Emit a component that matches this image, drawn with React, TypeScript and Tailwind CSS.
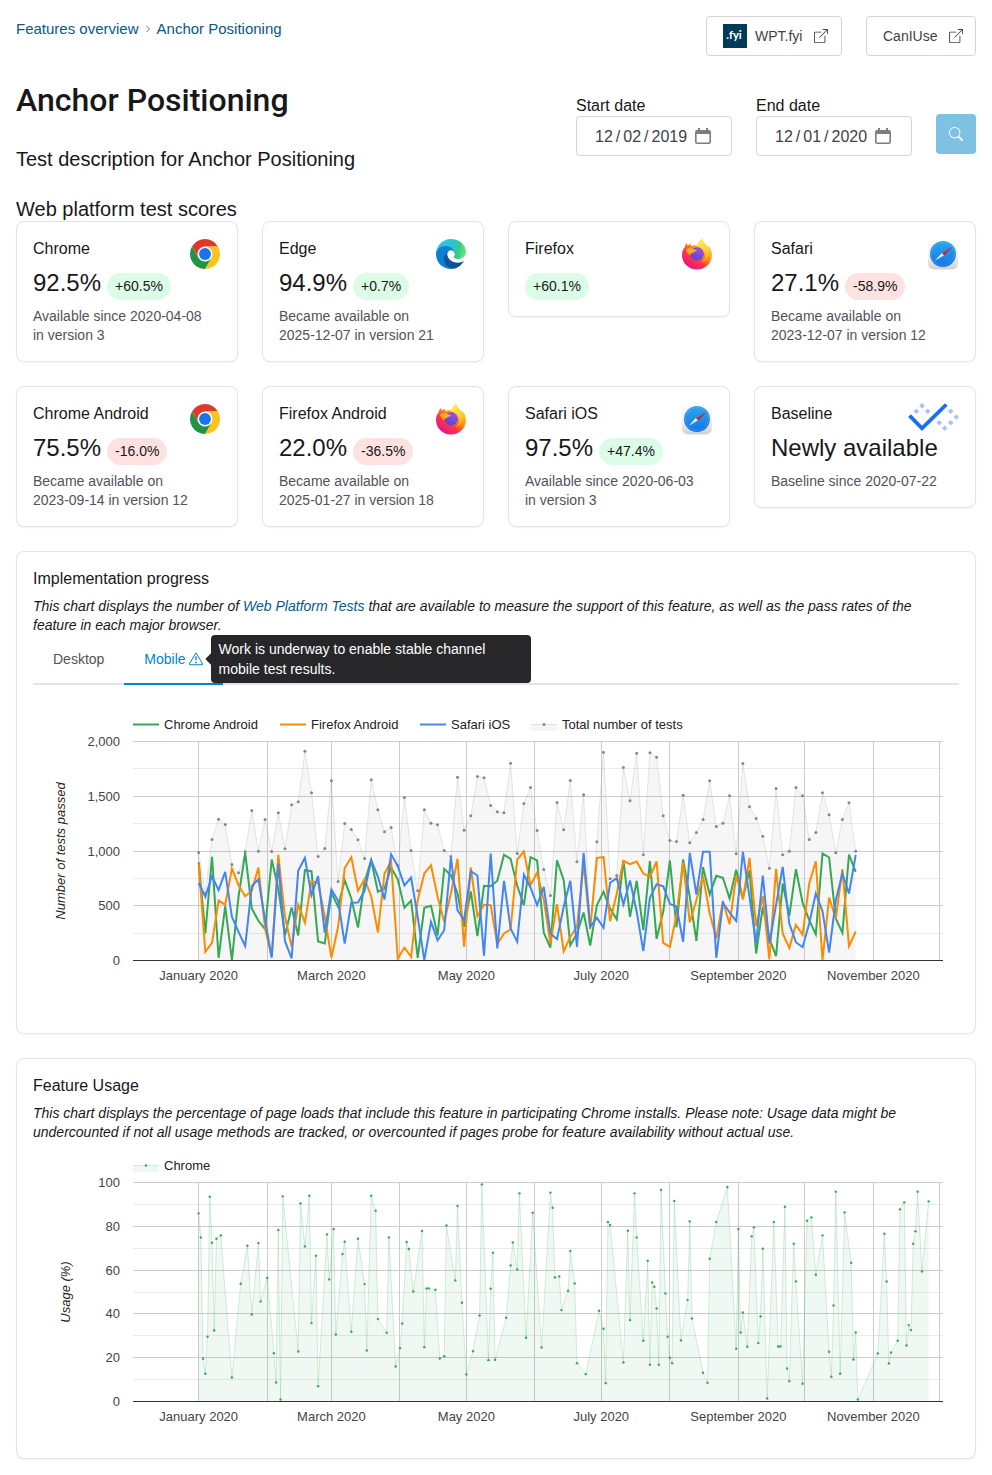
import React from "react";
import { BsBoxArrowUpRight, BsExclamationTriangle, BsSearch } from "react-icons/bs";

/* ---------- Browser logos ---------- */

function ChromeLogo() {
  return (
    <svg viewBox="-1.6 -1.6 51.2 51.2" className="size-8" role="img" aria-label="Chrome logo">
      <circle cx="24" cy="24" r="12" fill="#fff" />
      <path d="M24 12H44.78A24 24 0 0 0 3.22 12L13.61 30A12 12 0 0 1 24 12Z" fill="#e0392b" />
      <path d="M34.39 30 24 48A24 24 0 0 0 44.78 12H24A12 12 0 0 1 34.39 30Z" fill="#fcc31b" />
      <path d="M13.61 30 3.22 12A24 24 0 0 0 24 48L34.39 30A12 12 0 0 1 13.61 30Z" fill="#229342" />
      <circle cx="24" cy="24" r="9.5" fill="#1a73e8" />
    </svg>
  );
}

function EdgeLogo() {
  return (
    <svg viewBox="-8.5 -8.5 273 273" className="size-8" role="img" aria-label="Edge logo">
      <defs>
        <linearGradient id="edge-dark" x1="60" y1="180" x2="236" y2="180" gradientUnits="userSpaceOnUse">
          <stop offset="0" stopColor="#0c59a4" />
          <stop offset="1" stopColor="#114a8b" />
        </linearGradient>
        <linearGradient id="edge-mid" x1="140" y1="70" x2="50" y2="230" gradientUnits="userSpaceOnUse">
          <stop offset="0" stopColor="#1b7fc2" />
          <stop offset="0.3" stopColor="#1180d0" />
          <stop offset="1" stopColor="#0680d7" />
        </linearGradient>
        <linearGradient id="edge-top" x1="20" y1="60" x2="250" y2="110" gradientUnits="userSpaceOnUse">
          <stop offset="0" stopColor="#35c1f1" />
          <stop offset="0.45" stopColor="#2cc0d8" />
          <stop offset="0.75" stopColor="#36c98b" />
          <stop offset="1" stopColor="#66eb6e" />
        </linearGradient>
      </defs>
      <path
        d="M231.1 190.5a98 98 0 0 1-10.5 4.7 101.9 101.9 0 0 1-35.9 6.4c-47.3 0-88.5-32.5-88.5-74.3 0-11.4 6.4-22 16.4-27.4-42.8 1.8-53.8 46.4-53.8 72.5 0 74 68.1 81.4 82.8 81.4 7.9 0 19.8-2.3 27-4.6l1.3-.4a128.3 128.3 0 0 0 64.6-54.2c1.5-2.4-.8-5.2-3.4-4.1z"
        fill="url(#edge-dark)"
      />
      <path
        d="M105.7 241.4a79.2 79.2 0 0 1-22.7-21.3 80.7 80.7 0 0 1 29.5-120c3.2-1.5 8.4-4.1 15.5-4a32.4 32.4 0 0 1 25.7 13 31.9 31.9 0 0 1 6.3 18.7c0-.2 24.5-79.6-80-79.6-43.9 0-80 41.7-80 78.2-.2 19.3 4 38.5 12.1 56a128 128 0 0 0 156.4 67 75.5 75.5 0 0 1-62.8-8z"
        fill="url(#edge-mid)"
      />
      <path
        d="M152.3 148.9c-.8 1-3.3 2.5-3.3 5.7 0 2.6 1.7 5.1 4.8 7.3 14.4 10 41.5 8.7 41.6 8.7 10.7 0 21.1-2.9 30.3-8.3A61.4 61.4 0 0 0 256 109.4c.3-22.4-8-37.3-11.4-43.9C223.5 23.9 177.7 0 128 0 58 0 1 56.2 0 126.2c.5-36.5 36.8-66 80-66 3.5 0 23.5.3 42 10.1 16.3 8.6 24.9 19 30.8 29.3 6.2 10.6 7.3 24.1 7.3 29.5 0 5.4-2.7 13.3-7.8 19.8z"
        fill="url(#edge-top)"
      />
    </svg>
  );
}

function FirefoxLogo() {
  return (
    <svg viewBox="0 0 32 32" className="size-8" role="img" aria-label="Firefox logo">
      <defs>
        <linearGradient id="ff-body" x1="26" y1="5" x2="7" y2="29" gradientUnits="userSpaceOnUse">
          <stop offset="0" stopColor="#ffdc3e" />
          <stop offset="0.35" stopColor="#ff980e" />
          <stop offset="0.65" stopColor="#ff3647" />
          <stop offset="1" stopColor="#e31587" />
        </linearGradient>
        <linearGradient id="ff-flame" x1="20" y1="0" x2="27" y2="25" gradientUnits="userSpaceOnUse">
          <stop offset="0" stopColor="#fff44f" />
          <stop offset="0.5" stopColor="#ffd03a" />
          <stop offset="1" stopColor="#ff8a16" />
        </linearGradient>
        <radialGradient id="ff-globe" cx="19" cy="12" r="10" gradientUnits="userSpaceOnUse">
          <stop offset="0" stopColor="#a04bea" />
          <stop offset="1" stopColor="#5a4bd2" />
        </radialGradient>
      </defs>
      <path
        d="M3.8 9.2C4 7.6 4.7 6 5.8 5c.1 1.2.5 2 1 2.6C7.7 6.600 9 5.900 9.800 5.700c-.2 1 .1 1.800.5 2.300C13 6.800 16 7 18 8c0-3 1-5.500 3-7.500.4 2.600 1.800 4 3.600 5.700 1 .9 1.800 2.200 2.200 3.300.2-.6.1-1.300 0-2C30 10.500 31 13.300 31 17c0 8.300-6.600 14.500-15 14.500S1 25.200 1 17c0-3.200 1-6 2.800-7.800z"
        fill="url(#ff-body)"
      />
      <path
        d="M16 8.500C16.500 5 18.500 2.500 21 .5c.4 2.600 1.800 4 3.600 5.700 3 2.800 4.200 6.300 3.500 10.300-.8 4.300-4 7-7 7.300 2.500-2 3.900-5.300 3-8.300-1-3-4-6-8.100-7z"
        fill="url(#ff-flame)"
      />
      <circle cx="16.200" cy="15.800" r="6.600" fill="url(#ff-globe)" />
      <path
        d="M4.800 11.800c2-1.600 4.300-1.800 6.200-1.300C9.500 12 9 14.500 9.800 17.500c-2.600-1-4.300-3.300-5-5.700z"
        fill="#ff9420"
      />
      <path d="M5.500 11.500C7.500 9.800 9.800 9.900 11.500 10.700c1.300.6 2.700.9 4.500 1-.3 1.300-1.600 1.900-3 2.200-1 .3-1.500.9-1.500 1.700-2.800-.2-5-1.800-6-4.100z" fill="#ffae2a" />
    </svg>
  );
}

function SafariLogo() {
  return (
    <svg viewBox="0 0 32 32" className="size-8" role="img" aria-label="Safari logo">
      <defs>
        <linearGradient id="saf-tile" x1="0" y1="1" x2="0" y2="32" gradientUnits="userSpaceOnUse">
          <stop offset="0" stopColor="#fdfdfd" />
          <stop offset="0.6" stopColor="#eeeeee" />
          <stop offset="1" stopColor="#cfcfcf" />
        </linearGradient>
        <linearGradient id="saf-dial" x1="0" y1="3" x2="0" y2="29" gradientUnits="userSpaceOnUse">
          <stop offset="0" stopColor="#2ba8ee" />
          <stop offset="1" stopColor="#1673e8" />
        </linearGradient>
      </defs>
      <rect x="1" y="2" width="30" height="29.600" rx="6" fill="url(#saf-tile)" />
      <circle cx="16" cy="16" r="13" fill="url(#saf-dial)" />
      <circle cx="16" cy="16" r="11.400" fill="none" stroke="#fff" strokeOpacity="0.4" strokeWidth="0.800" strokeDasharray="0.500 0.700" />
      <path d="M8 22.600 15 14.900 17 17.300Z" fill="#fff" />
      <path d="M25.600 8.700 15 14.900 17 17.300Z" fill="#e8352e" />
      <path d="M8 22.600 17 17.300 16 16Z" fill="#cfdbe6" />
      <path d="M25.600 8.700 17 17.300 16 16Z" fill="#b0222c" />
    </svg>
  );
}

const dots = [
  [14, 2.7], [8.3, 8.3], [19.7, 8.3], [42.7, 8.3], [48.3, 14], [42.7, 19.7], [31.3, 19.7], [36.7, 25.3],
];

function BaselineLogo() {
  return (
    <svg viewBox="-1 0 52 32" className="h-8 w-[52px]" role="img" aria-label="Baseline newly available">
      {dots.map(([x, y]) => (
        <path key={`${x}-${y}`} d={`M${x} ${y - 2.8}l2.800 2.800-2.800 2.800-2.800-2.800z`} fill="#a8c3f2" />
      ))}
      <path d="M1.500 12.700 14 25.400 38.300 1.500" fill="none" stroke="#1b6ef3" strokeWidth="3.800" />
    </svg>
  );
}

/* ---------- Score cards ---------- */

type Score = {
  name: string;
  logo: React.ReactNode;
  score?: string;
  delta?: string;
  notes?: string[];
};

const scores: Score[] = [
  { name: "Chrome", logo: <ChromeLogo />, score: "92.5%", delta: "+60.5%", notes: ["Available since 2020-04-08", "in version 3"] },
  { name: "Edge", logo: <EdgeLogo />, score: "94.9%", delta: "+0.7%", notes: ["Became available on", "2025-12-07 in version 21"] },
  { name: "Firefox", logo: <FirefoxLogo />, delta: "+60.1%" },
  { name: "Safari", logo: <SafariLogo />, score: "27.1%", delta: "-58.9%", notes: ["Became available on", "2023-12-07 in version 12"] },
  { name: "Chrome Android", logo: <ChromeLogo />, score: "75.5%", delta: "-16.0%", notes: ["Became available on", "2023-09-14 in version 12"] },
  { name: "Firefox Android", logo: <FirefoxLogo />, score: "22.0%", delta: "-36.5%", notes: ["Became available on", "2025-01-27 in version 18"] },
  { name: "Safari iOS", logo: <SafariLogo />, score: "97.5%", delta: "+47.4%", notes: ["Available since 2020-06-03", "in version 3"] },
  { name: "Baseline", logo: <BaselineLogo />, score: "Newly available", notes: ["Baseline since 2020-07-22"] },
];

function ScoreCard({ name, logo, score, delta, notes }: Score) {
  const pill = delta?.startsWith("+") ? "bg-[#dcfce7]" : "bg-[#fee2e2]";
  return (
    <article className="rounded-lg border border-[#e4e4e7] bg-white p-4 shadow-xs">
      <div className="flex h-8 items-start justify-between">
        <h3 className="text-base leading-[22px]">{name}</h3>
        {logo}
      </div>
      <div className="flex h-[30px] items-end gap-1.5 whitespace-nowrap">
        {score && <span className="text-2xl leading-[34px]">{score}</span>}
        {delta && <span className={`rounded-full px-2 text-sm leading-[27px] ${pill}`}>{delta}</span>}
      </div>
      {notes && (
        <p className="mt-[7px] text-sm leading-[19px] text-[#52525b]">
          {notes.map((n) => (
            <span key={n} className="block">{n}</span>
          ))}
        </p>
      )}
    </article>
  );
}

/* ---------- Charts ---------- */

const PLOT_H = 219;
const X0 = 165.7;
const PX_PER_DAY = 2.212;
// Samples are stored on a 657-step grid, measured downward from row 34 (top of the plot).
const LEVEL_TOP = 34;
const LEVEL_SPAN = 657;

const totalTests = [
  367, 490, 328, 267, 283, 403, 428, 365, 241, 363, 268, 364, 248, 356, 224, 215, 63, 188, 379, 355,
  152, 454, 280, 298, 329, 385, 149, 239, 305, 292, 406, 202, 361, 482, 239, 279, 284, 361, 379, 141,
  300, 257, 139, 143, 226, 245, 248, 99, 370, 220, 172, 301, 418, 496, 217, 299, 151, 395, 194, 580,
  335, 66, 446, 436, 112, 212, 69, 374, 68, 81, 257, 331, 334, 195, 338, 307, 268, 152, 289, 279,
  197, 371, 100, 230, 265, 318, 414, 175, 374, 363, 172, 197, 328, 307, 188, 254, 368, 268, 218, 363,
];
const chromeAndroid = [
  396, 610, 380, 683, 528, 690, 500, 368, 535, 572, 597, 388, 475, 615, 532, 616, 420, 423, 634, 640,
  487, 530, 450, 505, 592, 455, 390, 485, 475, 412, 448, 533, 511, 683, 533, 527, 616, 416, 435, 490,
  590, 484, 618, 467, 468, 452, 374, 386, 467, 525, 381, 391, 608, 652, 390, 450, 645, 610, 547, 646,
  525, 485, 535, 568, 390, 560, 452, 600, 393, 626, 545, 391, 592, 388, 500, 632, 411, 493, 437, 443,
  505, 419, 505, 420, 670, 530, 625, 678, 460, 557, 417, 518, 570, 613, 370, 382, 565, 608, 373, 425,
];
const firefoxAndroid = [
  400, 665, 638, 511, 524, 415, 465, 498, 482, 412, 595, 680, 374, 560, 650, 523, 578, 453, 458, 560,
  682, 590, 414, 381, 482, 447, 498, 607, 430, 393, 685, 652, 680, 510, 430, 405, 500, 575, 490, 386,
  650, 412, 558, 524, 525, 642, 610, 598, 388, 364, 465, 427, 510, 640, 522, 664, 620, 590, 400, 597,
  383, 381, 573, 490, 392, 402, 394, 430, 440, 394, 638, 650, 555, 397, 577, 510, 438, 550, 625, 513,
  582, 436, 508, 383, 587, 498, 688, 416, 610, 653, 584, 614, 460, 393, 690, 502, 565, 417, 648, 604,
];
const safariIos = [
  458, 500, 438, 480, 425, 560, 605, 648, 468, 447, 570, 683, 400, 633, 685, 422, 383, 495, 438, 608,
  478, 512, 640, 518, 517, 482, 390, 440, 508, 372, 408, 466, 442, 560, 690, 575, 630, 600, 382, 540,
  570, 423, 436, 677, 370, 655, 452, 595, 635, 434, 472, 525, 470, 610, 627, 530, 452, 650, 368, 590,
  563, 593, 458, 444, 523, 451, 545, 663, 503, 462, 468, 521, 530, 635, 368, 493, 365, 365, 683, 518,
  547, 573, 365, 500, 640, 436, 640, 525, 410, 580, 636, 651, 580, 490, 543, 667, 510, 430, 490, 374,
];

// [day of the year, level]; levels run from 97.5 (100%) to 754 (0%).
const usage: [number, number][] = [
  [0, 190], [1, 262], [2, 626], [3, 671], [4, 560], [5, 140], [6, 278], [7, 541], [8, 266], [10, 256],
  [15, 682], [19, 401], [22, 287], [24, 493], [27, 279], [28, 454], [31, 384], [34, 609], [35, 697], [36, 240],
  [37, 748], [38, 139], [45, 604], [46, 160], [48, 289], [50, 137], [51, 519], [53, 317], [54, 708], [58, 253],
  [59, 388], [61, 237], [62, 553], [65, 312], [66, 275], [69, 545], [72, 266], [75, 402], [76, 601], [78, 137],
  [80, 182], [81, 507], [85, 548], [86, 262], [89, 649], [91, 594], [92, 520], [94, 276], [95, 297], [97, 424],
  [101, 243], [102, 591], [103, 415], [104, 415], [107, 419], [109, 625], [111, 618], [112, 226], [116, 391], [117, 168],
  [119, 458], [121, 673], [124, 603], [127, 496], [128, 103], [131, 630], [132, 416], [133, 308], [134, 629], [139, 503],
  [141, 346], [142, 277], [144, 358], [145, 130], [148, 563], [151, 188], [155, 592], [159, 128], [160, 173], [161, 382],
  [163, 379], [164, 480], [167, 422], [168, 303], [170, 400], [171, 639], [175, 672], [181, 482], [183, 536], [184, 699],
  [185, 216], [186, 225], [192, 637], [194, 242], [195, 510], [197, 130], [198, 262], [201, 572], [203, 332], [204, 644],
  [205, 397], [206, 410], [207, 475], [208, 644], [209, 120], [211, 430], [212, 560], [213, 623], [214, 639], [215, 153],
  [218, 571], [221, 450], [222, 214], [223, 505], [228, 668], [230, 698], [231, 326], [234, 216], [239, 111], [243, 596],
  [244, 237], [245, 547], [246, 487], [248, 590], [250, 259], [251, 232], [253, 579], [254, 499], [255, 296], [257, 745],
  [260, 216], [262, 589], [263, 589], [265, 170], [266, 655], [267, 693], [269, 281], [270, 394], [273, 701], [275, 212],
  [277, 202], [279, 374], [282, 256], [285, 605], [286, 680], [287, 466], [288, 125], [290, 671], [292, 187], [295, 338],
  [296, 628], [297, 547], [298, 748], [307, 610], [310, 251], [311, 394], [312, 640], [313, 607], [316, 572], [317, 178],
  [319, 157], [320, 586], [321, 525], [322, 540], [323, 281], [324, 244], [325, 125], [327, 364], [330, 154],
];

type Point = { x: number; y: number };

const samplePoints = (levels: number[], top: number): Point[] =>
  levels.map((v, i) => ({ x: X0 + i * 3 * PX_PER_DAY, y: top + 0.5 + ((v - LEVEL_TOP) / LEVEL_SPAN) * PLOT_H }));

const toLine = (pts: Point[]) => pts.map((p, i) => `${i ? "L" : "M"}${p.x.toFixed(1)} ${p.y.toFixed(1)}`).join("");

function AreaSeries({ pts, top, color, r }: { pts: Point[]; top: number; color: string; r: number }) {
  const bottom = top + PLOT_H;
  return (
    <g>
      <path d={`${toLine(pts)}L${pts[pts.length - 1].x} ${bottom}L${pts[0].x} ${bottom}Z`} fill={color} fillOpacity="0.08" />
      <path d={toLine(pts)} fill="none" stroke={color} strokeOpacity="0.2" strokeWidth="1" />
      {pts.map((p) => (
        <circle key={p.x} cx={p.x} cy={p.y} r={r} fill={color} />
      ))}
    </g>
  );
}

const monthStarts = [0, 31, 60, 91, 121, 152, 182, 213, 244, 274, 305, 335];
const monthLabels: [number, string][] = [
  [0, "January 2020"], [60, "March 2020"], [121, "May 2020"], [182, "July 2020"], [244, "September 2020"], [305, "November 2020"],
];

function Grid({ top, ticks, children }: { top: number; ticks: string[]; children: React.ReactNode }) {
  const rows = (ticks.length - 1) * 2;
  return (
    <g>
      <g shapeRendering="crispEdges">
        {Array.from({ length: rows }, (_, i) => (
          <rect key={i} x="100" y={top + Math.round((i * PLOT_H) / rows)} width="810" height="1" fill={i % 2 ? "#ebebeb" : "#cccccc"} />
        ))}
        {monthStarts.map((d) => (
          <rect key={d} x={Math.round(X0 - 0.5 + d * PX_PER_DAY)} y={top} width="1" height={PLOT_H} fill="#cccccc" />
        ))}
      </g>
      {children}
      <rect x="100" y={top + PLOT_H} width="810" height="1" fill="#333333" shapeRendering="crispEdges" />
      {ticks.map((t, i) => (
        <text key={t} x="87" y={top + 5 + Math.round((i * PLOT_H) / (ticks.length - 1))} textAnchor="end" fill="#444444">{t}</text>
      ))}
      {monthLabels.map(([d, label]) => (
        <text key={label} x={X0 + d * PX_PER_DAY} y={top + PLOT_H + 20} textAnchor="middle" fill="#444444">{label}</text>
      ))}
    </g>
  );
}

const chartText = "block h-auto w-full font-['Liberation_Sans',Arial,sans-serif] text-[13px]";

function ProgressChart() {
  const top = 56;
  const lines: [string, string, number, number[]][] = [
    ["Chrome Android", "#34a853", 100, chromeAndroid],
    ["Firefox Android", "#fb8c00", 247, firefoxAndroid],
    ["Safari iOS", "#4285f4", 387, safariIos],
  ];
  return (
    <svg viewBox="0 0 926 332" className={chartText} role="img" aria-label="Number of tests passed over time">
      {lines.map(([label, color, x]) => (
        <g key={label}>
          <path d={`M${x} 39.500h26`} stroke={color} strokeWidth="2" />
          <text x={x + 31} y="44" fill="#222222">{label}</text>
        </g>
      ))}
      <rect x="498" y="39" width="26" height="7" fill="#f5f5f5" />
      <path d="M498 39.500h26" stroke="#e0e0e0" />
      <circle cx="511" cy="39.500" r="1.500" fill="#888888" />
      <text x="529" y="44" fill="#222222">Total number of tests</text>
      <Grid top={top} ticks={["2,000", "1,500", "1,000", "500", "0"]}>
        <AreaSeries pts={samplePoints(totalTests, top)} top={top} color="#888888" r={1.5} />
        {lines.map(([label, color, , data]) => (
          <path key={label} d={toLine(samplePoints(data, top))} fill="none" stroke={color} strokeWidth="2" />
        ))}
      </Grid>
      <text transform="translate(32 166) rotate(-90)" textAnchor="middle" fontStyle="italic" fill="#222222">Number of tests passed</text>
    </svg>
  );
}

function UsageChart() {
  const top = 40;
  const pts = usage.map(([d, v]) => ({ x: X0 + d * PX_PER_DAY, y: top + 0.5 + ((v - 97.5) / 656.5) * PLOT_H }));
  return (
    <svg viewBox="0 0 926 300" className={chartText} role="img" aria-label="Usage percentage over time">
      <rect x="100" y="23" width="26" height="7" fill="#eef7f1" />
      <path d="M100 23.500h26" stroke="#d3ecd9" />
      <circle cx="113" cy="23.500" r="1.200" fill="#34a853" />
      <text x="131" y="28" fill="#222222">Chrome</text>
      <Grid top={top} ticks={["100", "80", "60", "40", "20", "0"]}>
        <AreaSeries pts={pts} top={top} color="#34a853" r={1.2} />
      </Grid>
      <text transform="translate(37 150) rotate(-90)" textAnchor="middle" fontStyle="italic" fill="#222222">Usage (%)</text>
    </svg>
  );
}

/* ---------- Page ---------- */

const linkButton =
  "flex h-10 items-center rounded border border-[#d4d4d8] px-4 text-sm text-[#3f3f46]";

function DateField({ id, label, value }: { id: string; label: string; value: string }) {
  return (
    <div className="flex flex-col">
      <label htmlFor={id} className="text-base leading-5">{label}</label>
      <div className="flex h-10 w-[156px] items-center justify-between rounded border border-[#d4d4d8] bg-white pt-px pr-5 pl-[18px]">
        <input
          id={id}
          type="date"
          defaultValue={value}
          className="w-24 text-base text-[#3f3f46] outline-none [&::-webkit-calendar-picker-indicator]:hidden [&::-webkit-datetime-edit-day-field]:px-0 [&::-webkit-datetime-edit-month-field]:px-0 [&::-webkit-datetime-edit-text]:px-[3px] [&::-webkit-datetime-edit-year-field]:px-0"
        />
        <svg viewBox="0 0 16 16" className="mb-0.5 size-4 shrink-0" aria-hidden="true">
          <rect x="0.800" y="2.800" width="14.400" height="12.400" rx="1.500" fill="none" stroke="#7d7d80" strokeWidth="1.600" />
          <path d="M1 2.500h14v3.500H1zM3 0h2v3H3zM11 0h2v3h-2z" fill="#7d7d80" />
        </svg>
      </div>
    </div>
  );
}

const panel = "rounded-lg border border-[#e4e4e7] bg-white p-4 shadow-xs";

export default function App() {
  return (
    <main className="bg-white p-4 font-['Liberation_Sans',Arial,sans-serif] text-[#18181b]">
      <header className="flex items-start justify-between">
        <nav aria-label="Breadcrumb" className="flex items-center gap-1.5 pt-px text-[15px] leading-6 text-[#075985]">
          <a href="#features">Features overview</a>
          <svg viewBox="0 0 6 10" className="h-2 w-1.5" aria-hidden="true">
            <path d="M1 1l4 4-4 4" fill="none" stroke="#a1a1aa" strokeWidth="1.500" />
          </svg>
          <a href="#anchor-positioning">Anchor Positioning</a>
        </nav>
        <div className="flex gap-6">
          <a href="#wpt" className={`${linkButton} w-[136px] gap-2`}>
            <svg viewBox="0 0 24 24" className="size-6 shrink-0" aria-hidden="true">
              <rect width="24" height="24" fill="#003b57" />
              <text x="11" y="15" textAnchor="middle" fontFamily="Lato, sans-serif" fontWeight="900" fontSize="11" fill="#fff">.fyi</text>
            </svg>
            <span>WPT.fyi</span>
            <BsBoxArrowUpRight className="ml-1 size-3.5 shrink-0" />
          </a>
          <a href="#caniuse" className={`${linkButton} w-[110px] gap-3`}>
            <span>CanIUse</span>
            <BsBoxArrowUpRight className="size-3.5 shrink-0" />
          </a>
        </div>
      </header>

      <div className="mt-6 flex items-start justify-between">
        <div>
          <h1 className="font-[Roboto,sans-serif] text-[32px] leading-10 font-medium">Anchor Positioning</h1>
          <p className="mt-[27px] text-xl leading-6">Test description for Anchor Positioning</p>
        </div>
        <form className="flex items-end gap-6 pt-4">
          <DateField id="start" label="Start date" value="2019-12-02" />
          <DateField id="end" label="End date" value="2020-12-01" />
          <button type="button" aria-label="Update dates" className="mb-0.5 flex size-10 items-center justify-center rounded bg-[#0284c7] text-white opacity-50">
            <BsSearch className="size-3.5" />
          </button>
        </form>
      </div>

      <section className="mt-[26px]">
        <h2 className="text-xl leading-6">Web platform test scores</h2>
        <div className="grid grid-cols-4 items-start gap-6">
          {scores.map((s) => (
            <ScoreCard key={s.name} {...s} />
          ))}
        </div>
      </section>

      <section className={`${panel} mt-6`}>
        <h2 className="text-base leading-[22px]">Implementation progress</h2>
        <p className="mt-[7px] text-sm leading-[19px] italic">
          This chart displays the number of <a href="#wpt" className="text-[#075985]">Web Platform Tests</a> that are available to measure the support of this feature, as well as the pass rates of the feature in each major browser.
        </p>
        <div role="tablist" className="flex h-[50px] border-b-2 border-[#e4e4e7] text-sm">
          <button type="button" role="tab" aria-selected="false" className="px-5 text-[#52525b]">Desktop</button>
          <button type="button" role="tab" aria-selected="true" className="-mb-0.5 flex items-center gap-[3px] border-b-2 border-[#0284c7] px-5 text-[#0284c7]">
            Mobile
            <span className="relative">
              <BsExclamationTriangle className="size-3.5" />
              <span role="tooltip" className="absolute top-1/2 left-full z-10 ml-2 w-80 -translate-y-1/2 rounded bg-[#27272a] px-2 py-1 text-left leading-5 text-white">
                <span className="absolute top-1/2 -left-1 size-2 -translate-y-1/2 rotate-45 bg-[#27272a]" />
                Work is underway to enable stable channel mobile test results.
              </span>
            </span>
          </button>
        </div>
        <ProgressChart />
      </section>

      <section className={`${panel} mt-6`}>
        <h2 className="text-base leading-[22px]">Feature Usage</h2>
        <p className="mt-[7px] text-sm leading-[19px] italic">
          This chart displays the percentage of page loads that include this feature in participating Chrome installs. Please note: Usage data might be undercounted if not all usage methods are tracked, or overcounted if pages probe for feature availability without actual use.
        </p>
        <UsageChart />
      </section>
    </main>
  );
}
